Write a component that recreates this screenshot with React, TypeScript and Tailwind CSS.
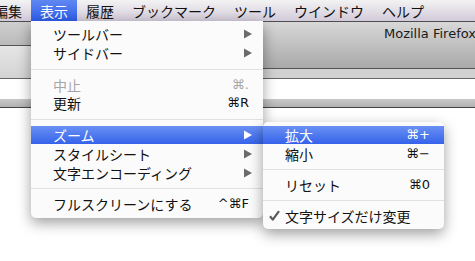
import React from "react";

const jp = "font-['Noto_Sans_CJK_JP','Noto_Sans',sans-serif]";

function Arrow({ className }: { className: string }) {
  return (
    <svg width="8" height="10" viewBox="0 0 8 10" className={className}>
      <path d="M0 0.5L8 5L0 9.5Z" fill="currentColor" />
    </svg>
  );
}

function Check() {
  return (
    <svg width="11" height="11" viewBox="0 0 11 11" className="text-[#5a5a5a]">
      <path d="M1 6.2L3.8 9.6L10 1.2" fill="none" stroke="currentColor" strokeWidth="2.2" strokeLinejoin="round" />
    </svg>
  );
}

type ItemProps = {
  label: string;
  h: string;
  shortcut?: string;
  arrow?: boolean;
  disabled?: boolean;
  active?: boolean;
  check?: boolean;
};

function Item({ label, h, shortcut, arrow, disabled, active, check }: ItemProps) {
  const base = active
    ? "bg-linear-to-b from-[#6a90f4] to-[#3562ea] text-white"
    : disabled
    ? "text-[#a6a6a6]"
    : "text-[#111]";
  return (
    <div className={`flex items-center ${h} ${base}`}>
      <div className="w-[22px] shrink-0 flex justify-center pl-[1px]">{check ? <Check /> : null}</div>
      <div className={`flex-1 text-[14px] leading-[18px] whitespace-nowrap ${jp}`}>{label}</div>
      {shortcut ? (
        <div className="mr-[14px] text-[13px] leading-[18px] font-['DejaVu_Sans','Noto_Sans_CJK_JP',sans-serif] whitespace-nowrap">
          {shortcut}
        </div>
      ) : null}
      {arrow ? (
        <Arrow className={`mr-[11px] ${active ? "text-white" : "text-[#6b6b6b]"}`} />
      ) : null}
    </div>
  );
}

function Sep({ h, pt }: { h: string; pt: string }) {
  return (
    <div className={`${h} ${pt}`}>
      <div className="h-px bg-[#e1e1e1]" />
    </div>
  );
}

const menubarItems = ["編集", "表示", "履歴", "ブックマーク", "ツール", "ウインドウ", "ヘルプ"];

export default function App() {
  return (
    <div className="relative h-[261px] w-[475px] overflow-hidden bg-white">
      {/* Menu bar */}
      <div className={`flex h-[22px] border-b border-[#4e4e4e] bg-linear-to-b from-[#f3f3f3] to-[#d2cad9] ${jp}`}>
        {menubarItems.map((t, i) => (
          <div
            key={t}
            className={`px-[9px] h-[21px] flex items-center text-[14px] leading-[18px] whitespace-nowrap ${
              i === 0 ? "-ml-[15px]" : ""
            } ${i === 1 ? "bg-linear-to-b from-[#6088f2] to-[#2d5ce7] text-white" : "text-[#111]"}`}
          >
            {t}
          </div>
        ))}
      </div>

      {/* Background window */}
      <div className="flex h-[57px]">
        <div className="w-[31px] shrink-0 flex flex-col">
          <div className="h-[23px] bg-linear-to-b from-[#cfcfcf] to-[#bababa]" />
          <div className="h-px bg-[#555]" />
          <div className="h-[32px] bg-linear-to-b from-[#e6e6e6] to-[#d3d3d3]" />
          <div className="h-px bg-[#666]" />
        </div>
        <div className="flex-1 flex flex-col">
          <div className="h-[46px] bg-linear-to-b from-[#d8d8d8] to-[#a9a9a9] pl-[353px] pt-[3px] overflow-hidden whitespace-nowrap text-[13px] leading-[18px] text-[#1a1a1a] font-['DejaVu_Sans',sans-serif]">
            Mozilla Firefox
          </div>
          <div className="h-px bg-[#555]" />
          <div className="h-[9px] bg-[#d1d1d1]" />
          <div className="h-px bg-[#666]" />
        </div>
      </div>
      <div className="h-[20px] bg-white" />
      <div className="h-[8px] bg-linear-to-b from-[#c9c9c9] to-[#b2b2b2]" />
      <div className="h-px bg-[#444]" />

      {/* Main menu */}
      <div className="absolute left-[31px] top-[21px] w-[232px] rounded-b-[5px] bg-[#fbfbfb] pt-[3px] pb-[5px] shadow-[0_5px_14px_rgba(0,0,0,0.38)]">
        <Item label="ツールバー" h="h-[19px]" arrow />
        <Item label="サイドバー" h="h-[19px]" arrow />
        <Sep h="h-[14px]" pt="pt-[7px]" />
        <Item label="中止" h="h-[18px]" shortcut="⌘." disabled />
        <Item label="更新" h="h-[18px]" shortcut="⌘R" />
        <Sep h="h-[14px]" pt="pt-[7px]" />
        <Item label="ズーム" h="h-[18px]" arrow active />
        <Item label="スタイルシート" h="h-[19px]" arrow />
        <Item label="文字エンコーディング" h="h-[19px]" arrow />
        <Sep h="h-[13px]" pt="pt-[6px]" />
        <Item label="フルスクリーンにする" h="h-[18px]" shortcut="^⌘F" />
      </div>

      {/* Submenu */}
      <div className="absolute left-[263px] top-[122px] w-[181px] rounded-[5px] bg-[#fbfbfb] pt-[4px] pb-[4px] shadow-[0_5px_14px_rgba(0,0,0,0.38)]">
        <Item label="拡大" h="h-[18px]" shortcut="⌘+" active />
        <Item label="縮小" h="h-[20px]" shortcut="⌘−" />
        <Sep h="h-[12px]" pt="pt-[5px]" />
        <Item label="リセット" h="h-[17px]" shortcut="⌘0" />
        <Sep h="h-[13px]" pt="pt-[7px]" />
        <Item label="文字サイズだけ変更" h="h-[19px]" check />
      </div>
    </div>
  );
}
